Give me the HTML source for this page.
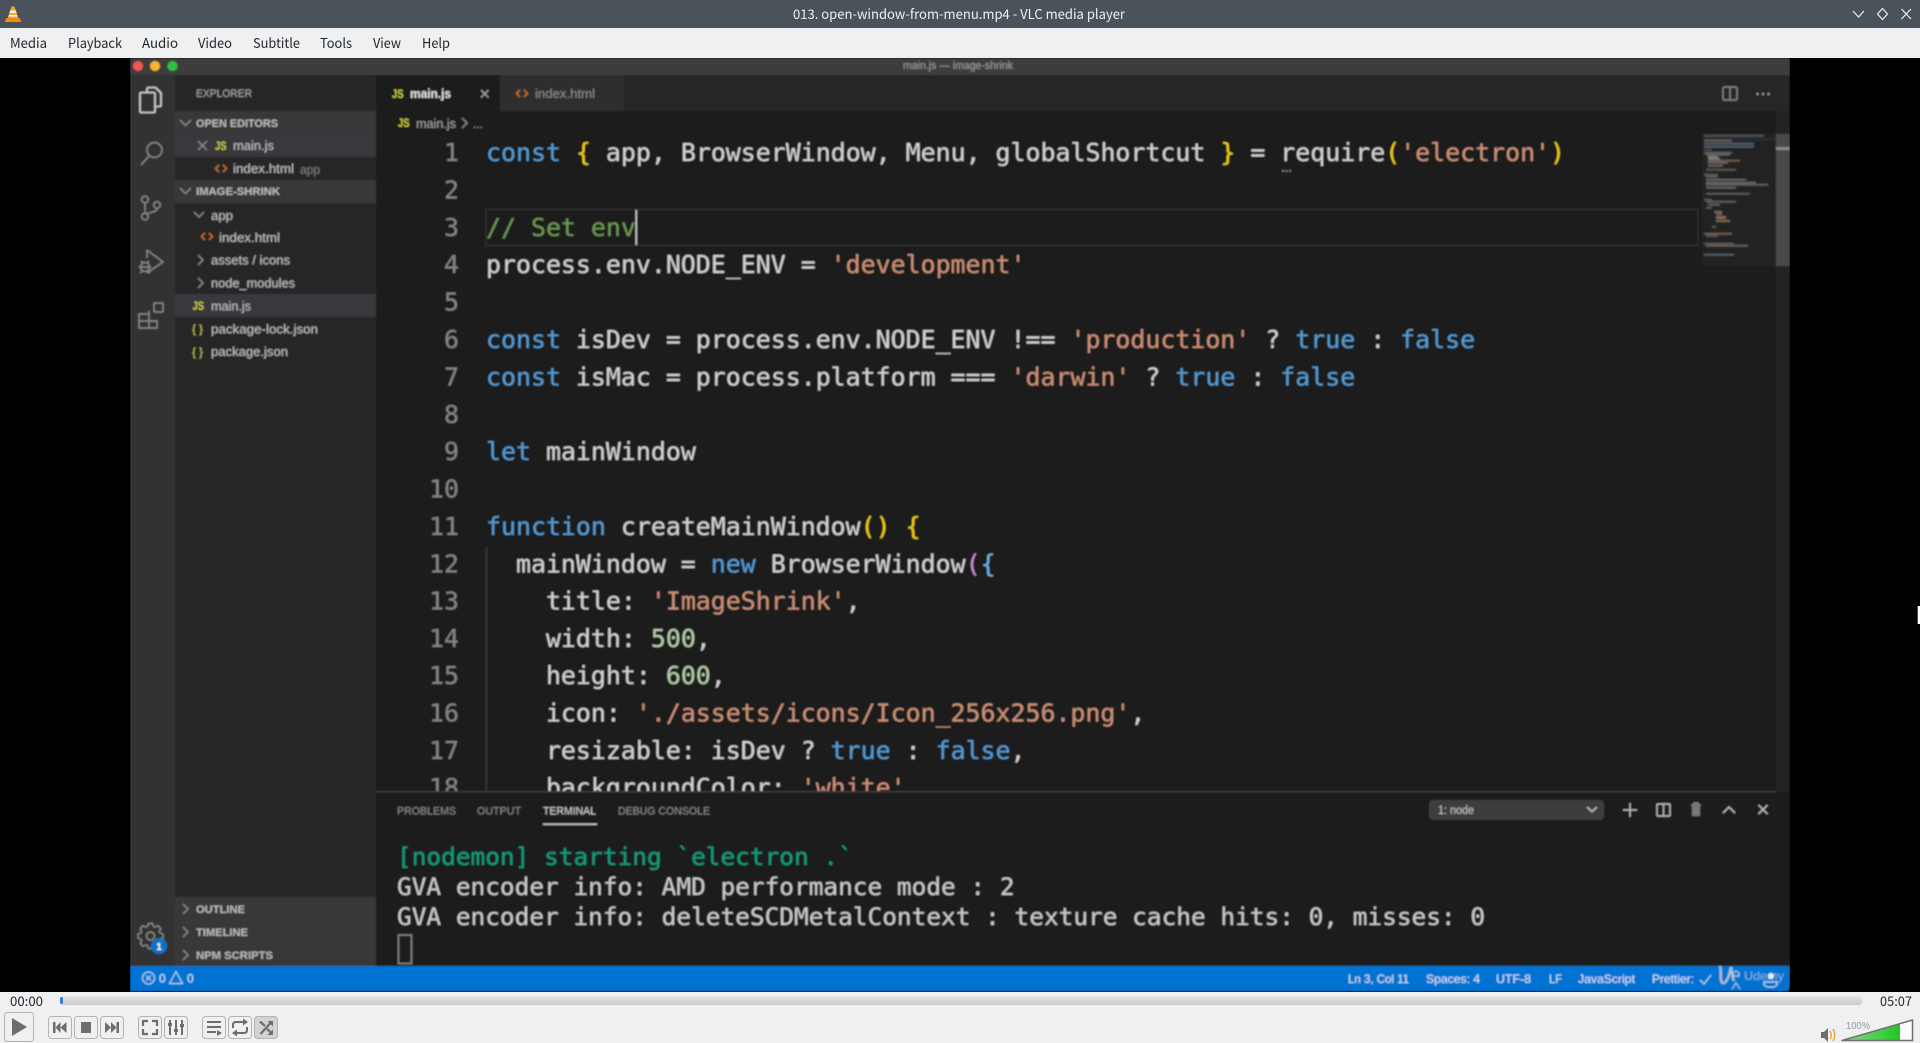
<!DOCTYPE html>
<html lang="en"><head><meta charset="utf-8"><title>013. open-window-from-menu.mp4 - VLC media player</title>
<style>
html,body{margin:0;padding:0;width:1920px;height:1043px;overflow:hidden;background:#000}
svg{display:block;position:absolute;left:0;top:0}
text{white-space:pre}
.ui{font-family:"Noto Sans CJK SC","Liberation Sans",sans-serif}
.s{font-family:"Liberation Sans",sans-serif}
.m{font-family:"DejaVu Sans Mono","Liberation Mono",monospace;font-size:24.9px;fill:#d4d4d4}
.t{font-family:"DejaVu Sans Mono","Liberation Mono",monospace;font-size:24.43px;fill:#cccccc}
.n{font-family:"DejaVu Sans Mono","Liberation Mono",monospace;font-size:24.9px;fill:#858585;text-anchor:end}
.k{fill:#569cd6}.r{fill:#ce9178}.c{fill:#6a9955}.d{fill:#b5cea8}.y{fill:#f5cf10}.p{fill:#c890c8}.b{fill:#6fb4e8}
.side{font-size:13px;fill:#c2c2c2}
.hd{font-size:11px;font-weight:bold;fill:#bbbbbb}
.st{font-size:12px;fill:#d8e8f8}
.ic{fill:none;stroke:#8a8a8a;stroke-width:1.4}
.btn{fill:#eff0f1;stroke:#b4b4b4;stroke-width:1}
.g{fill:#6d6d6d}
</style></head><body>
<svg width="1920" height="1043" viewBox="0 0 1920 1043" xmlns="http://www.w3.org/2000/svg">
<defs>
<linearGradient id="sk" x1="0" y1="0" x2="0" y2="1"><stop offset="0" stop-color="#e4e5e6"/><stop offset="1" stop-color="#c8c9ca"/></linearGradient>
<linearGradient id="vol" x1="0" y1="0" x2="1" y2="0"><stop offset="0" stop-color="#8ed98e"/><stop offset="1" stop-color="#1fc81f"/></linearGradient>
<filter id="bl" x="0" y="0" width="100%" height="100%"><feGaussianBlur stdDeviation="0.8"/></filter>
<filter id="bm" x="-5%" y="-5%" width="110%" height="110%"><feGaussianBlur stdDeviation="0.5"/></filter>
<clipPath id="ed"><rect x="376" y="111" width="1400" height="681"/></clipPath>
</defs>

<rect x="0" y="0" width="1920" height="28" fill="#4a525a"/>
<rect x="0" y="28" width="1920" height="30" fill="#eff0f1"/>
<rect x="0" y="58" width="1920" height="934" fill="#000"/>

<!-- VLC cone -->
<path d="M11.500 6.500h3l4 12h-11z" fill="#f6a21c"/><path d="M10.300 10.500h5.400l.9 2.600h-7.200zM9 15h8l.5 1.600h-9z" fill="#f4f4f4"/><path d="M6.500 18h13l1.500 3v1h-16v-1z" fill="#f08a12"/>
<text class="ui" x="793" y="19" font-size="13.5" fill="#eef0f1" textLength="332" lengthAdjust="spacingAndGlyphs">013. open-window-from-menu.mp4 - VLC media player</text>
<path d="M1853 11l5.500 6 5.500-6" fill="none" stroke="#eef0f1" stroke-width="1.2"/>
<path d="M1882.500 8.500l5 5.500-5 5.500-5-5.500z" fill="none" stroke="#eef0f1" stroke-width="1.2"/>
<path d="M1901.500 9l9.500 10M1911 9l-9.500 10" fill="none" stroke="#eef0f1" stroke-width="1.2"/>

<g class="ui" font-size="13.5" fill="#232629">
<text x="10" y="48" textLength="37" lengthAdjust="spacingAndGlyphs">Media</text>
<text x="68" y="48" textLength="54" lengthAdjust="spacingAndGlyphs">Playback</text>
<text x="142" y="48" textLength="36" lengthAdjust="spacingAndGlyphs">Audio</text>
<text x="198" y="48" textLength="34" lengthAdjust="spacingAndGlyphs">Video</text>
<text x="253" y="48" textLength="47" lengthAdjust="spacingAndGlyphs">Subtitle</text>
<text x="320" y="48" textLength="32" lengthAdjust="spacingAndGlyphs">Tools</text>
<text x="373" y="48" textLength="28" lengthAdjust="spacingAndGlyphs">View</text>
<text x="422" y="48" textLength="28" lengthAdjust="spacingAndGlyphs">Help</text>
</g>

<!-- video -->
<g filter="url(#bl)">
<rect x="130" y="58" width="1660" height="934" fill="#1e1e1e"/>
<rect x="130" y="58" width="1660" height="17" fill="#3c3c3c"/>
<circle cx="138" cy="66" r="5" fill="#f2574f"/><circle cx="155" cy="66" r="5" fill="#f5b52e"/><circle cx="172.500" cy="66" r="5" fill="#2dbf44"/>
<text class="s" x="903" y="69" font-size="11" fill="#a0a0a0" textLength="110" lengthAdjust="spacingAndGlyphs">main.js — image-shrink</text>

<rect x="130" y="75" width="45" height="891" fill="#333333"/>
<rect x="175" y="75" width="201" height="891" fill="#252526"/>
<rect x="376" y="75" width="1414" height="36" fill="#252526"/>
<rect x="376" y="75" width="124" height="36" fill="#1e1e1e"/>
<rect x="500" y="75" width="124" height="36" fill="#2d2d2d"/>

<!-- activity icons -->
<g fill="none" stroke="#d8d8d8" stroke-width="1.6"><path d="M147 92v-3q0-1.500 1.500-1.500h7l5.500 5.500v12q0 1.500-1.500 1.500h-4"/><path d="M141.500 92.500h12q1.500 0 1.500 1.500v17q0 1.500-1.500 1.500h-12q-1.500 0-1.500-1.500v-17q0-1.500 1.500-1.500z"/></g>
<g class="ic"><circle cx="154.500" cy="150" r="7.500"/><path d="M149 156l-8 9"/>
<circle cx="145" cy="199.500" r="3.300"/><circle cx="145" cy="216.500" r="3.300"/><circle cx="157" cy="205" r="3.300"/><path d="M145 203v10M157 208.500c0 4-7 3-11 6"/>
<path d="M147 250l16 12-16 11M147 250v8"/><circle cx="145" cy="267" r="4.500"/><path d="M139 267h12M141 261l2 2M149 261l-2 2M140 273l2-2M150 273l-2-2"/>
<path d="M139 314h10v14h-10zM149 314v14M139 321h18M149 314v-3"/><rect x="154" y="303" width="9" height="9" rx="1"/><path d="M149 321h8v7h-8"/>
<g transform="translate(150.500 936)"><circle r="4"/>
<path d="M-3-9.500-2-12.500 2-12.500 3-9.500A10 10 0 0 1 4.600-8.840"/>
<path transform="rotate(45)" d="M-3-9.500-2-12.500 2-12.500 3-9.500A10 10 0 0 1 4.600-8.840"/>
<path transform="rotate(90)" d="M-3-9.500-2-12.500 2-12.500 3-9.500A10 10 0 0 1 4.600-8.840"/>
<path transform="rotate(135)" d="M-3-9.500-2-12.500 2-12.500 3-9.500A10 10 0 0 1 4.600-8.840"/>
<path transform="rotate(180)" d="M-3-9.500-2-12.500 2-12.500 3-9.500A10 10 0 0 1 4.600-8.840"/>
<path transform="rotate(225)" d="M-3-9.500-2-12.500 2-12.500 3-9.500A10 10 0 0 1 4.600-8.840"/>
<path transform="rotate(270)" d="M-3-9.500-2-12.500 2-12.500 3-9.500A10 10 0 0 1 4.600-8.840"/>
<path transform="rotate(315)" d="M-3-9.500-2-12.500 2-12.500 3-9.500A10 10 0 0 1 4.600-8.840"/>
</g></g>
<circle cx="159" cy="946" r="8" fill="#0b72c9"/><text class="s" x="159" y="950" font-size="10" font-weight="bold" fill="#fff" text-anchor="middle">1</text>

<!-- sidebar -->
<text class="s" x="196" y="97" font-size="11" fill="#a8a8a8" textLength="56" lengthAdjust="spacingAndGlyphs">EXPLORER</text>
<rect x="175" y="111" width="201" height="23" fill="#383838"/>
<rect x="175" y="134" width="201" height="23" fill="#37373d"/>
<rect x="175" y="180" width="201" height="23" fill="#383838"/>
<rect x="175" y="294" width="201" height="23" fill="#37373d"/>
<rect x="175" y="897" width="201" height="69" fill="#383838"/>
<g class="ic" stroke="#a0a0a0">
<path d="M180 120l5.500 5.500 5.500-5.500M180 188l5.500 5.500 5.500-5.500M194 212l5 5 5-5"/>
<path d="M198 141l9 9M207 141l-9 9"/>
<path d="M198 255l5 5-5 5M198 278l5 5-5 5"/>
<path d="M183 904l5 5-5 5M183 927l5 5-5 5M183 950l5 5-5 5"/>
</g>
<g class="s">
<text class="hd" x="196" y="127" textLength="82" lengthAdjust="spacingAndGlyphs">OPEN EDITORS</text>
<text class="hd" x="196" y="195" textLength="84" lengthAdjust="spacingAndGlyphs">IMAGE-SHRINK</text>
<text class="hd" x="196" y="913" textLength="49" lengthAdjust="spacingAndGlyphs">OUTLINE</text>
<text class="hd" x="196" y="936" textLength="52" lengthAdjust="spacingAndGlyphs">TIMELINE</text>
<text class="hd" x="196" y="959" textLength="77" lengthAdjust="spacingAndGlyphs">NPM SCRIPTS</text>
<text class="side" x="233" y="150" textLength="41" lengthAdjust="spacingAndGlyphs">main.js</text>
<text class="side" x="233" y="173" textLength="61" lengthAdjust="spacingAndGlyphs">index.html</text>
<text class="side" x="300" y="174" style="fill:#7e7e7e" font-size="12" textLength="20" lengthAdjust="spacingAndGlyphs">app</text>
<text class="side" x="211" y="220" textLength="22" lengthAdjust="spacingAndGlyphs">app</text>
<text class="side" x="219" y="242" textLength="61" lengthAdjust="spacingAndGlyphs">index.html</text>
<text class="side" x="211" y="264.5" textLength="79" lengthAdjust="spacingAndGlyphs">assets / icons</text>
<text class="side" x="211" y="287.5" textLength="84" lengthAdjust="spacingAndGlyphs">node_modules</text>
<text class="side" x="211" y="310.5" textLength="40" lengthAdjust="spacingAndGlyphs">main.js</text>
<text class="side" x="211" y="333.5" textLength="107" lengthAdjust="spacingAndGlyphs">package-lock.json</text>
<text class="side" x="211" y="356" textLength="77" lengthAdjust="spacingAndGlyphs">package.json</text>
</g>
<g class="s" font-size="11.5" font-weight="bold" fill="#cbcb41">
<text x="215" y="150" textLength="11.5" lengthAdjust="spacingAndGlyphs">JS</text><text x="192.500" y="310" textLength="11.5" lengthAdjust="spacingAndGlyphs">JS</text><text x="392" y="98" textLength="11.5" lengthAdjust="spacingAndGlyphs">JS</text><text x="398" y="127" textLength="11.5" lengthAdjust="spacingAndGlyphs">JS</text>
</g>
<g fill="none" stroke="#c9702a" stroke-width="1.5">
<path d="M219 165l-3.500 3.500 3.500 3.500M223 165l3.500 3.500-3.500 3.500"/>
<path d="M205 233l-3.500 3.500 3.500 3.500M209 233l3.500 3.500-3.500 3.500"/>
<path d="M520 90l-3.500 3.500 3.500 3.500M524 90l3.500 3.500-3.500 3.500"/>
</g>
<g class="s" font-size="12" fill="#c4bf5a"><text x="192" y="333" textLength="11" lengthAdjust="spacing">{}</text><text x="192" y="356" textLength="11" lengthAdjust="spacing">{}</text></g>

<!-- tabs -->
<text class="s" x="410" y="98" font-size="13" font-weight="bold" fill="#e4e4e4" textLength="41" lengthAdjust="spacingAndGlyphs">main.js</text>
<path d="M481 90l7.500 7.500M488.500 90l-7.500 7.500" fill="none" stroke="#b0b0b0" stroke-width="1.200"/>
<text class="s" x="535" y="98" font-size="13" fill="#8c8c8c" textLength="60" lengthAdjust="spacingAndGlyphs">index.html</text>
<text class="s" x="416" y="128" font-size="13" fill="#a0a0a0" textLength="40" lengthAdjust="spacingAndGlyphs">main.js</text>
<path d="M462 118l5 5-5 5" class="ic"/>
<text class="s" x="473" y="128" font-size="12" fill="#a0a0a0">...</text>
<g class="ic"><rect x="1723" y="87" width="14" height="13" rx="1.500"/><path d="M1730 87v13"/></g>
<g fill="#a0a0a0"><circle cx="1757.500" cy="94" r="1.200"/><circle cx="1763" cy="94" r="1.200"/><circle cx="1768.500" cy="94" r="1.200"/></g>

<!-- editor -->
<g clip-path="url(#ed)">
<rect x="486" y="209.500" width="1212" height="36" fill="#1e1e1e" stroke="#2d2d2d" stroke-width="1.5"/>
<rect x="635.500" y="210" width="1.500" height="35" fill="#c8c8c8"/>
<path d="M486.500 547v250" stroke="#3a3a3a" stroke-width="1.3"/>
<path d="M1282 171h10" stroke="#8a8a8a" stroke-width="1.5" stroke-dasharray="2 1.500"/>
<g class="n">
<text x="459" y="161">1</text><text x="459" y="198.5">2</text><text x="459" y="236">3</text><text x="459" y="273">4</text><text x="459" y="310.5">5</text><text x="459" y="348">6</text><text x="459" y="385.5">7</text><text x="459" y="423">8</text><text x="459" y="460">9</text><text x="459" y="497.5">10</text><text x="459" y="535">11</text><text x="459" y="572.5">12</text><text x="459" y="609.5">13</text><text x="459" y="647">14</text><text x="459" y="684">15</text><text x="459" y="721.5">16</text><text x="459" y="759">17</text><text x="459" y="796">18</text>
</g>
<g class="m">
<text x="486" y="161"><tspan class="k">const</tspan> <tspan class="y">{</tspan> app, BrowserWindow, Menu, globalShortcut <tspan class="y">}</tspan> = require<tspan class="y">(</tspan><tspan class="r">'electron'</tspan><tspan class="y">)</tspan></text>
<text x="486" y="236" style="fill:#6a9955">// Set env</text>
<text x="486" y="273">process.env.NODE_ENV = <tspan class="r">'development'</tspan></text>
<text x="486" y="348"><tspan class="k">const</tspan> isDev = process.env.NODE_ENV !== <tspan class="r">'production'</tspan> ? <tspan class="k">true</tspan> : <tspan class="k">false</tspan></text>
<text x="486" y="385.5"><tspan class="k">const</tspan> isMac = process.platform === <tspan class="r">'darwin'</tspan> ? <tspan class="k">true</tspan> : <tspan class="k">false</tspan></text>
<text x="486" y="460"><tspan class="k">let</tspan> mainWindow</text>
<text x="486" y="535"><tspan class="k">function</tspan> createMainWindow<tspan class="y">()</tspan> <tspan class="y">{</tspan></text>
<text x="486" y="572.5">  mainWindow = <tspan class="k">new</tspan> BrowserWindow<tspan class="p">(</tspan><tspan class="b">{</tspan></text>
<text x="486" y="609.5">    title: <tspan class="r">'ImageShrink'</tspan>,</text>
<text x="486" y="647">    width: <tspan class="d">500</tspan>,</text>
<text x="486" y="684">    height: <tspan class="d">600</tspan>,</text>
<text x="486" y="721.5">    icon: <tspan class="r">'./assets/icons/Icon_256x256.png'</tspan>,</text>
<text x="486" y="759">    resizable: isDev ? <tspan class="k">true</tspan> : <tspan class="k">false</tspan>,</text>
<text x="486" y="796">    backgroundColor: <tspan class="r">'white'</tspan></text>
</g>
</g>

<!-- minimap + scrollbar -->
<rect x="1776" y="111" width="14" height="681" fill="#232323"/>
<rect x="1776" y="134" width="14" height="132" fill="#484848"/>
<rect x="1776" y="147" width="14" height="3" fill="#8a8a8a"/>
<rect x="1702" y="134" width="74" height="132" fill="#242424"/>
<g filter="url(#bm)" opacity=".85">
<rect x="1704" y="135" width="60" height="1.600" fill="#6a6a6a"/>
<rect x="1704" y="138.500" width="72" height="1.500" fill="#23364a"/>
<rect x="1704" y="140" width="28" height="1.500" fill="#8a7a70"/>
<rect x="1704" y="143" width="50" height="1.500" fill="#6c7f95"/><rect x="1704" y="146" width="50" height="1.500" fill="#6c7f95"/>
<rect x="1704" y="149" width="8" height="1.300" fill="#666"/>
<rect x="1704" y="152" width="28" height="1.500" fill="#808080"/><rect x="1706" y="154" width="24" height="1.500" fill="#808080"/><rect x="1708" y="156" width="10" height="1.500" fill="#aaa"/><rect x="1708" y="158" width="12" height="1.500" fill="#aaa"/><rect x="1708" y="160" width="32" height="1.500" fill="#a07860"/><rect x="1708" y="162" width="20" height="1.500" fill="#888"/><rect x="1708" y="165" width="15" height="1.500" fill="#888"/>
<rect x="1706" y="169" width="30" height="1.500" fill="#7f7060"/>
<rect x="1704" y="174" width="14" height="1.500" fill="#777"/><rect x="1706" y="176" width="12" height="1.500" fill="#777"/>
<rect x="1706" y="179" width="40" height="1.500" fill="#8a8a8a"/><rect x="1706" y="182" width="50" height="1.500" fill="#8a8a8a"/><rect x="1706" y="184" width="62" height="1.500" fill="#8a7a70"/><rect x="1706" y="187" width="30" height="1.500" fill="#888"/>
<rect x="1706" y="193" width="44" height="1.500" fill="#777"/>
<rect x="1704" y="199" width="8" height="1.500" fill="#777"/><rect x="1706" y="201" width="30" height="1.500" fill="#708090"/><rect x="1708" y="204" width="12" height="1.500" fill="#a07860"/><rect x="1706" y="207" width="6" height="1.500" fill="#777"/>
<rect x="1714" y="211" width="8" height="1.500" fill="#888"/><rect x="1716" y="213" width="6" height="2" fill="#a07860"/><rect x="1716" y="216" width="10" height="3" fill="#a07860"/><rect x="1716" y="220" width="14" height="2" fill="#a07860"/>
<rect x="1712" y="226" width="4" height="1.500" fill="#777"/><rect x="1704" y="233" width="28" height="1.500" fill="#a07860"/><rect x="1706" y="235" width="12" height="1.500" fill="#777"/>
<rect x="1704" y="243" width="30" height="1.500" fill="#777"/><rect x="1706" y="245" width="42" height="1.500" fill="#8a7a70"/>
<rect x="1704" y="254" width="30" height="1.500" fill="#6c7f95"/>
</g>

<!-- panel -->
<rect x="376" y="792" width="1414" height="174" fill="#1e1e1e"/>
<rect x="376" y="791" width="1400" height="1.500" fill="#3a3a3a"/>
<g class="s" font-size="11">
<text x="397" y="814.5" fill="#8a8a8a" textLength="59" lengthAdjust="spacingAndGlyphs">PROBLEMS</text>
<text x="477" y="814.5" fill="#8a8a8a" textLength="44" lengthAdjust="spacingAndGlyphs">OUTPUT</text>
<text x="543" y="814.5" fill="#d4d4d4" textLength="53" lengthAdjust="spacingAndGlyphs">TERMINAL</text>
<text x="618" y="814.5" fill="#8a8a8a" textLength="92" lengthAdjust="spacingAndGlyphs">DEBUG CONSOLE</text>
</g>
<rect x="543" y="823.500" width="54" height="1.500" fill="#c8c8c8"/>
<rect x="1429" y="800" width="175" height="20" rx="4" fill="#3c3c3c"/>
<text class="s" x="1438" y="814" font-size="11.5" fill="#c8c8c8" textLength="36" lengthAdjust="spacingAndGlyphs">1: node</text>
<path d="M1587 807l5 4.500 5-4.500" fill="none" stroke="#c0c0c0" stroke-width="1.5"/>
<path d="M1623 810h14M1630 803v14" fill="none" stroke="#bdbdbd" stroke-width="1.4"/>
<g fill="none" stroke="#bdbdbd" stroke-width="1.4"><rect x="1657" y="804" width="13" height="12" rx="1"/><path d="M1663.500 804v12"/></g>
<path d="M1691 805h10M1694 805v-2h4v2" fill="none" stroke="#8e8e8e" stroke-width="1.3"/><rect x="1692" y="806" width="8" height="10" fill="#777"/>
<path d="M1723 813l6-6 6 6" fill="none" stroke="#bdbdbd" stroke-width="1.5"/>
<path d="M1758.500 805l9 9M1767.500 805l-9 9" fill="none" stroke="#bdbdbd" stroke-width="1.5"/>
<g class="t">
<text x="397" y="865" style="fill:#0fa07e">[nodemon] starting `electron .`</text>
<text x="397" y="895">GVA encoder info: AMD performance mode : 2</text>
<text x="397" y="925">GVA encoder info: deleteSCDMetalContext : texture cache hits: 0, misses: 0</text>
</g>
<rect x="398.500" y="935" width="13" height="28.500" fill="none" stroke="#8f8f8f" stroke-width="1.4"/>

<!-- status -->
<path d="M130 966h1660v19q0 6-6 6H130z" fill="#0072d1"/>
<g fill="none" stroke="#bcdcf5" stroke-width="1"><circle cx="148.500" cy="978" r="6"/><path d="M146 975.500l5 5M151 975.500l-5 5M176 971.500l6.500 12h-13z"/></g>
<g class="s st">
<text x="159" y="982.5">0</text><text x="187" y="982.5">0</text>
<text x="1348" y="983" textLength="61" lengthAdjust="spacingAndGlyphs">Ln 3, Col 11</text>
<text x="1426" y="983" textLength="54" lengthAdjust="spacingAndGlyphs">Spaces: 4</text>
<text x="1496" y="983" textLength="35" lengthAdjust="spacingAndGlyphs">UTF-8</text>
<text x="1549" y="983" textLength="13" lengthAdjust="spacingAndGlyphs">LF</text>
<text x="1578" y="983" textLength="57" lengthAdjust="spacingAndGlyphs">JavaScript</text>
<text x="1652" y="983" textLength="42" lengthAdjust="spacingAndGlyphs">Prettier:</text>
</g>
<path d="M1700 980l4 4 7-9" fill="none" stroke="#cfe4f7" stroke-width="1"/>
<path d="M1720 966c2 8-1 16 3 17 4 0 6-7 8-16 1 5 1 10 3 14" fill="none" stroke="#a8bfd4" stroke-width="2.4"/>
<path d="M1733 973l3-2 3 2v3h-6zM1732 989l4-6 4 6" fill="none" stroke="#b6d3ec" stroke-width="1"/>
<text class="s" x="1744" y="980" font-size="12" fill="#7fb3dd" textLength="40" lengthAdjust="spacingAndGlyphs">Udemy</text>
<circle cx="1771" cy="976" r="3" fill="#e8eef4"/>
<path d="M1764 982h13v3l-3 2h-7l-3-2z" fill="none" stroke="#c8dff2" stroke-width="1"/>
</g>

<!-- cursor sliver -->
<rect x="1917" y="606" width="3" height="18" fill="#fff"/><rect x="1917" y="606" width="1" height="18" fill="#555"/>

<!-- controls -->
<rect x="0" y="992" width="1920" height="51" fill="#eff0f1"/>
<text class="ui" x="10" y="1006" font-size="13" fill="#232629" textLength="33" lengthAdjust="spacingAndGlyphs">00:00</text>
<text class="ui" x="1880" y="1006" font-size="13" fill="#232629" textLength="32" lengthAdjust="spacingAndGlyphs">05:07</text>
<rect x="60" y="996" width="1802" height="9" rx="3" fill="url(#sk)"/>
<rect x="60" y="997" width="3" height="7" rx="1.5" fill="#3083d8"/>

<rect class="btn" x="4.500" y="1012.500" width="29" height="29" rx="3"/>
<path d="M12 1018l15 9-15 9z" fill="#6d6d6d"/>
<rect class="btn" x="48.500" y="1016.500" width="23" height="22" rx="3"/>
<rect class="btn" x="74.500" y="1016.500" width="23" height="22" rx="3"/>
<rect class="btn" x="100.500" y="1016.500" width="23" height="22" rx="3"/>
<rect class="btn" x="138.500" y="1016.500" width="23" height="22" rx="3"/>
<rect class="btn" x="164.500" y="1016.500" width="23" height="22" rx="3"/>
<rect class="btn" x="202.500" y="1016.500" width="23" height="22" rx="3"/>
<rect class="btn" x="228.500" y="1016.500" width="23" height="22" rx="3"/>
<rect x="254.500" y="1016.500" width="23" height="22" rx="3" fill="#d2d3d4" stroke="#b4b4b4"/>
<path class="g" d="M53 1022h2.500v11H53zM60.500 1022v11l-5-5.500zM66.500 1022v11l-6-5.500z"/>
<rect class="g" x="81" y="1022" width="10" height="11"/>
<path class="g" d="M105 1022v11l6-5.500zM111 1022v11l5.500-5.500zM116.500 1022h2.500v11h-2.500z"/>
<path d="M143 1026v-5h5M157 1026v-5h-5M143 1029v5h5M157 1029v5h-5" fill="none" stroke="#6d6d6d" stroke-width="2.2"/>
<path d="M170 1020v15M176 1020v15M182 1020v15" stroke="#6d6d6d" stroke-width="2"/><path class="g" d="M168 1023h4v3h-4zM174 1029h4v3h-4zM180 1024h4v3h-4z"/>
<path d="M207 1022h14M207 1027h14M207 1032h9" stroke="#6d6d6d" stroke-width="2"/><path class="g" d="M217 1030l5 3-5 3z"/>
<path d="M233 1028v-3q0-3 3-3h8M247 1027v3q0 3-3 3h-8" fill="none" stroke="#6d6d6d" stroke-width="2"/><path class="g" d="M243 1018.500l5 3.500-5 3.500zM237 1029.500l-5 3.500 5 3.500z"/>
<path d="M260 1021.500l5 4.500M267 1029l5 4.500M260.500 1034l10-11" fill="none" stroke="#6d6d6d" stroke-width="2.2"/><path class="g" d="M267.500 1021h5.500v5.500zM267.500 1035h5.500v-5.500z"/>

<!-- volume -->
<path class="g" d="M1821 1032h3l4-4v14l-4-4h-3z"/>
<path d="M1830 1031q2.500 4 0 8M1833 1029q3.500 6 0 12" fill="none" stroke="#f09a2a" stroke-width="1.3"/>
<path d="M1842 1040l70-20v20z" fill="#fbfbfb"/>
<path d="M1842 1040l58-16.500V1040z" fill="url(#vol)"/>
<path d="M1842 1040.500l70.500-20.500v20.500z" fill="none" stroke="#6f6f6f" stroke-width="1.5" stroke-linejoin="round"/>
<text class="s" x="1846" y="1029" font-size="10" fill="#9a9a9a" textLength="24" lengthAdjust="spacingAndGlyphs">100%</text>
</svg>
</body></html>
